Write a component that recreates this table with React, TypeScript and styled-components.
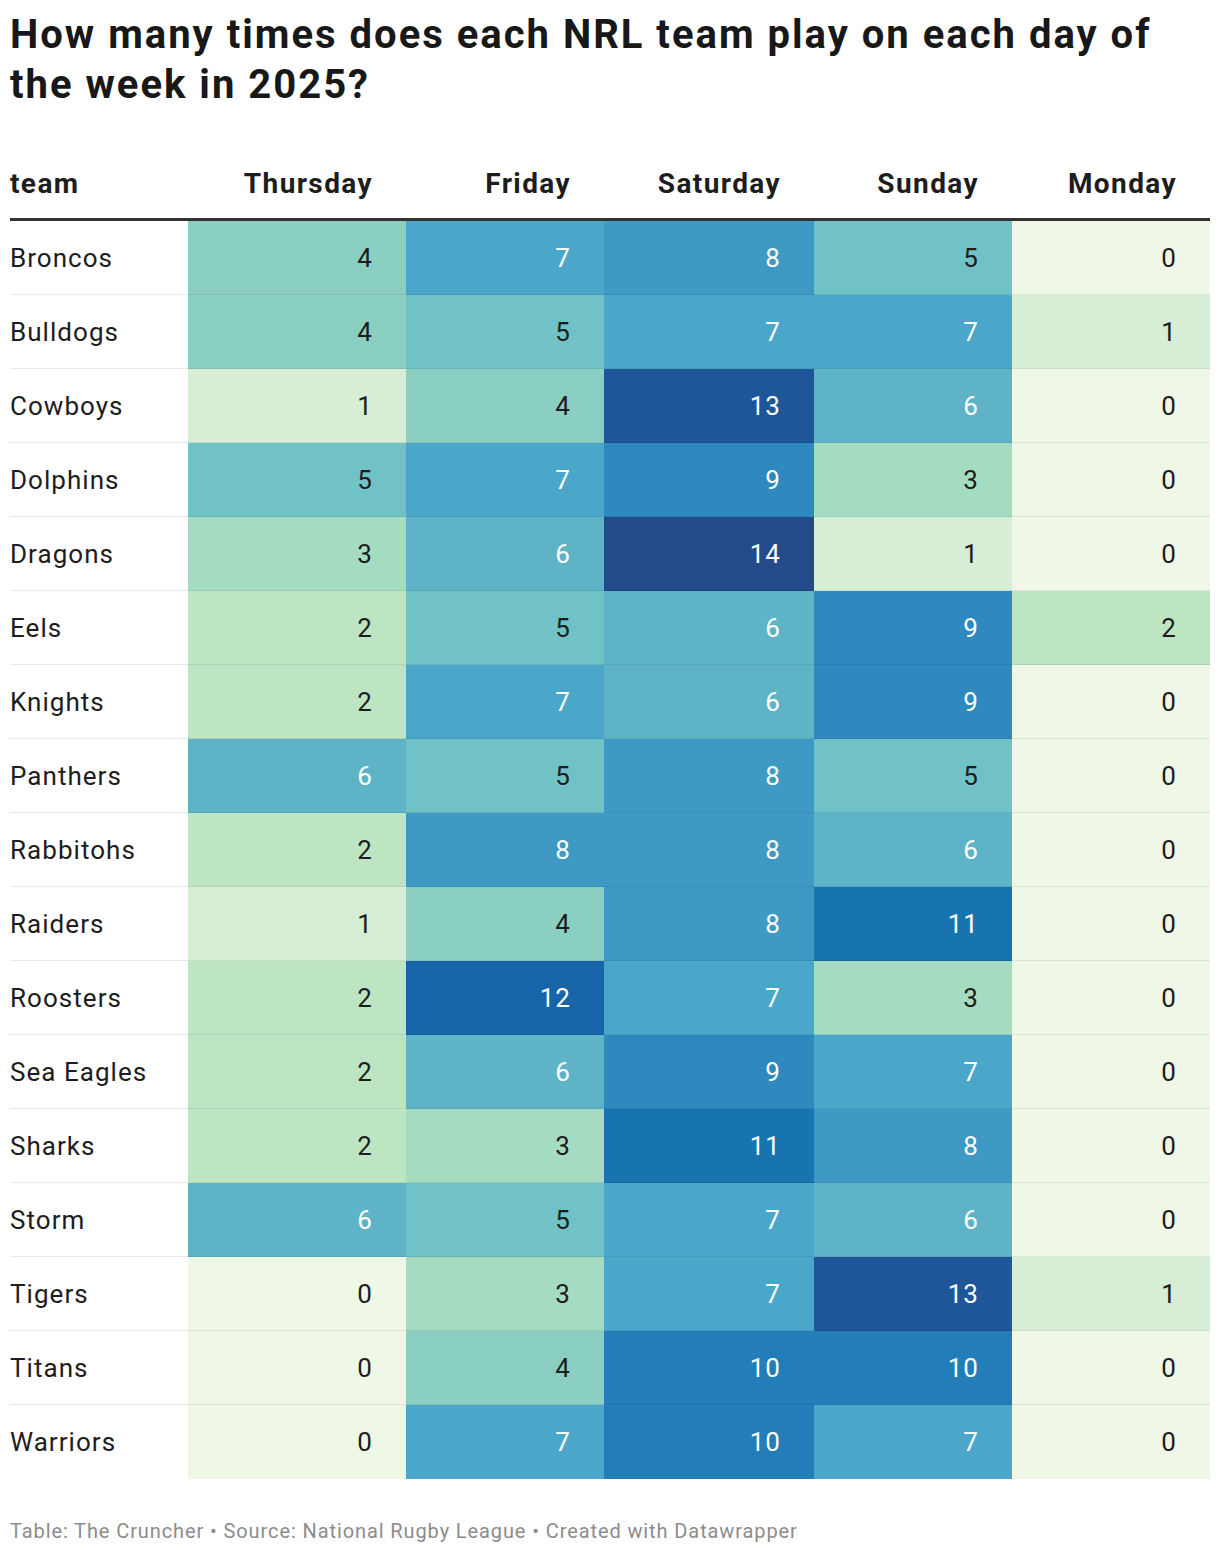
import React from "react";
import styled, { createGlobalStyle } from "styled-components";

const GlobalStyle = createGlobalStyle`
  html, body { margin: 0; padding: 0; background: #ffffff; }
  body { font-family: Roboto, "Liberation Sans", Arial, sans-serif; }
`;

const days = ["Thursday", "Friday", "Saturday", "Sunday", "Monday"];

const data: [string, number[]][] = [
  ["Broncos", [4, 7, 8, 5, 0]],
  ["Bulldogs", [4, 5, 7, 7, 1]],
  ["Cowboys", [1, 4, 13, 6, 0]],
  ["Dolphins", [5, 7, 9, 3, 0]],
  ["Dragons", [3, 6, 14, 1, 0]],
  ["Eels", [2, 5, 6, 9, 2]],
  ["Knights", [2, 7, 6, 9, 0]],
  ["Panthers", [6, 5, 8, 5, 0]],
  ["Rabbitohs", [2, 8, 8, 6, 0]],
  ["Raiders", [1, 4, 8, 11, 0]],
  ["Roosters", [2, 12, 7, 3, 0]],
  ["Sea Eagles", [2, 6, 9, 7, 0]],
  ["Sharks", [2, 3, 11, 8, 0]],
  ["Storm", [6, 5, 7, 6, 0]],
  ["Tigers", [0, 3, 7, 13, 1]],
  ["Titans", [0, 4, 10, 10, 0]],
  ["Warriors", [0, 7, 10, 7, 0]],
];

const scale = [
  "#eff7e7",
  "#d6eed5",
  "#bee5c2",
  "#a4dbc1",
  "#8acfc2",
  "#70c2c6",
  "#5eb4c6",
  "#4aa7c9",
  "#3e99c4",
  "#2e8abe",
  "#227db8",
  "#1873b1",
  "#1765a8",
  "#1e5699",
  "#244a8a",
];

const Page = styled.div`
  padding: 10px 10px 0 10px;
  width: 1200px;
`;

const Title = styled.h1`
  margin: 0;
  font-family: Roboto, "Liberation Sans", Arial, sans-serif;
  font-weight: 700;
  font-size: 40px;
  line-height: 50px;
  color: #181818;
  letter-spacing: 0.05em;
`;

const Grid = styled.div`
  display: grid;
  grid-template-columns: 178px 218px 198px 210px 198px 198px;
`;

const HeadCell = styled.div<{ $align: "left" | "right" }>`
  padding: 57px ${(p) => (p.$align === "right" ? "33px" : "0")} 17px 0;
  text-align: ${(p) => p.$align};
  font-weight: 700;
  font-size: 28px;
  line-height: 34px;
  letter-spacing: 0.05em;
  color: #1d1d1d;
  border-bottom: 3px solid #333333;
`;

const TeamCell = styled.div<{ $last: boolean }>`
  height: ${(p) => (p.$last ? "74px" : "73px")};
  display: flex;
  align-items: center;
  font-size: 26px;
  letter-spacing: 0.04em;
  color: #1d1d1d;
  border-bottom: ${(p) => (p.$last ? "none" : "1px solid #e8e8e8")};
`;

const ValueCell = styled.div<{ $bg: string; $dark: boolean; $last: boolean }>`
  height: 74px;
  box-sizing: border-box;
  display: flex;
  align-items: center;
  justify-content: flex-end;
  padding-right: 33px;
  font-size: 26px;
  letter-spacing: 0.04em;
  background: ${(p) => p.$bg};
  color: ${(p) => (p.$dark ? "#ffffff" : "#1d1d1d")};
  box-shadow: ${(p) => (p.$last ? "none" : "inset 0 -1px 0 rgba(0, 0, 0, 0.07)")};
`;

const Footer = styled.div`
  margin-top: 40px;
  font-size: 20px;
  line-height: 24px;
  letter-spacing: 0.045em;
  color: #8c8c8c;
`;

export default function App() {
  return (
    <>
      <GlobalStyle />
      <Page>
        <Title>How many times does each NRL team play on each day of the week in 2025?</Title>
        <Grid>
          <HeadCell $align="left">team</HeadCell>
          {days.map((d) => (
            <HeadCell key={d} $align="right">
              {d}
            </HeadCell>
          ))}
          {data.map(([team, vals], i) => {
            const last = i === data.length - 1;
            return (
              <React.Fragment key={team}>
                <TeamCell $last={last}>{team}</TeamCell>
                {vals.map((v, j) => (
                  <ValueCell key={j} $bg={scale[v]} $dark={v >= 6} $last={last}>
                    {v}
                  </ValueCell>
                ))}
              </React.Fragment>
            );
          })}
        </Grid>
        <Footer>Table: The Cruncher • Source: National Rugby League • Created with Datawrapper</Footer>
      </Page>
    </>
  );
}
